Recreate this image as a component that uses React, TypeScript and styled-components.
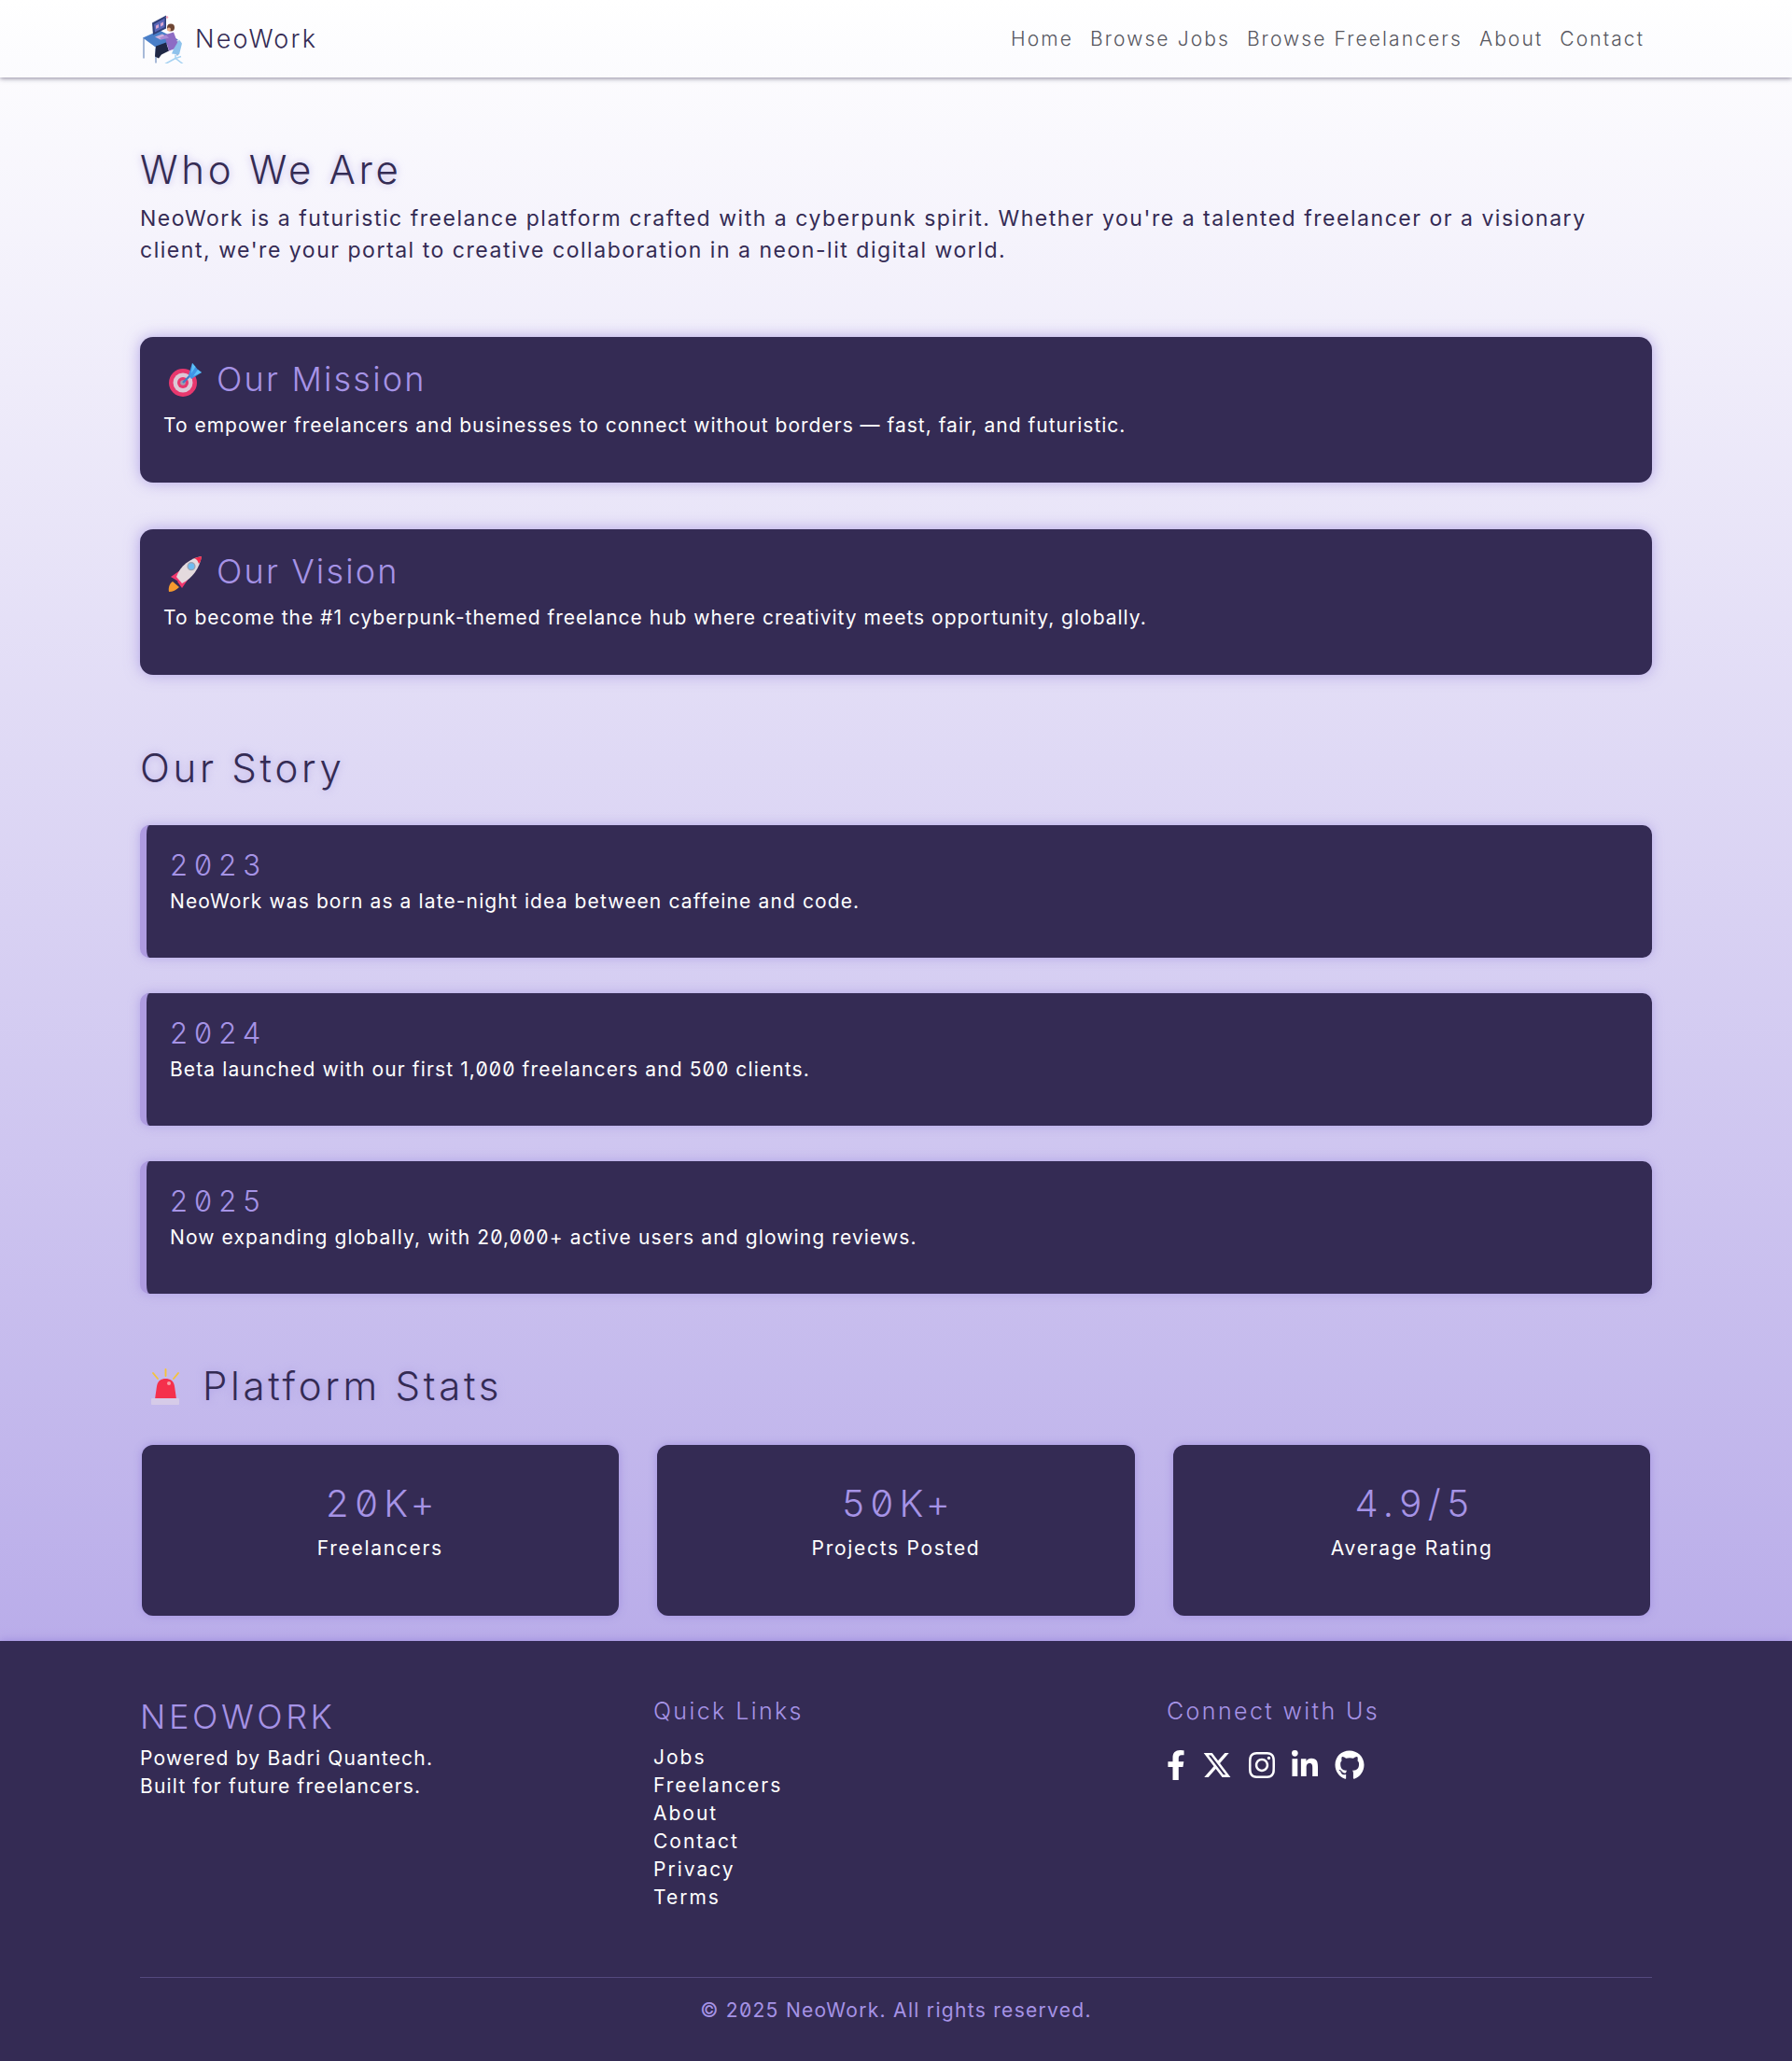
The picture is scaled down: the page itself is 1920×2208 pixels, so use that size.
import React from "react";
import styled, { createGlobalStyle } from "styled-components";
import { FaFacebookF, FaInstagram, FaLinkedinIn, FaGithub } from "react-icons/fa";
import { FaXTwitter } from "react-icons/fa6";

const dark = "#342b54";
const accent = "#a693e6";

const Global = createGlobalStyle`
  html, body { margin: 0; padding: 0; }
  body {
    min-height: 2208px;
    background: linear-gradient(180deg, #ffffff 0%, #a898e4 100%);
    font-family: Inter, "Liberation Sans", sans-serif;
    font-weight: 400;
    font-feature-settings: "zero" 1;
    color: ${dark};
  }
  * { box-sizing: border-box; }
`;

const Header = styled.header`
  height: 83px;
  padding: 0 158px 0 150px;
  display: flex;
  align-items: center;
  justify-content: space-between;
  background: linear-gradient(180deg, #ffffff, #fbfbfe);
  box-shadow: 0 1px 5px rgba(40, 32, 70, 0.55);
  position: relative;
`;
const Brand = styled.div`
  display: flex;
  align-items: center;
  gap: 11px;
  font-size: 27px;
  font-weight: 300;
  letter-spacing: 2.2px;
  color: ${dark};
`;
const Nav = styled.nav`
  display: flex;
  gap: 18px;
`;
const NavLink = styled.a`
  font-size: 21px;
  font-weight: 300;
  color: #56565e;
  letter-spacing: 2.1px;
`;

const Main = styled.main`
  padding: 75px 150px 27px;
`;
const Heading = styled.h1`
  margin: 0;
  font-size: 42px;
  line-height: 48px;
  font-weight: 300;
  letter-spacing: 3.7px;
  color: ${dark};
  text-shadow: 0 0 8px rgba(160, 143, 224, 0.6);
  display: flex;
  align-items: center;
  gap: 23px;
`;
const Lead = styled.p`
  margin: 11px 0 0;
  max-width: 1575px;
  font-size: 23px;
  line-height: 34px;
  letter-spacing: 1.53px;
  color: ${dark};
`;
const Cards = styled.div`
  margin-top: 76px;
  display: flex;
  flex-direction: column;
  gap: 50px;
`;
const Card = styled.section`
  height: 156px;
  padding: 23px 25px 0;
  border-radius: 14px;
  background: ${dark};
  box-shadow: 0 0 16px rgba(160, 143, 224, 0.75);
`;
const CardTitle = styled.h2`
  margin: 0;
  font-size: 36px;
  line-height: 44px;
  font-weight: 300;
  letter-spacing: 2.2px;
  color: ${accent};
  display: flex;
  align-items: center;
  gap: 16px;
  padding-left: 5px;
`;
const BodyText = styled.p`
  margin: 13px 0 0;
  font-size: 21px;
  line-height: 30px;
  letter-spacing: 1px;
  color: #fff;
`;
const StoryHeading = styled(Heading)`
  margin-top: 76px;
`;
const Timeline = styled.div`
  margin-top: 37px;
  display: flex;
  flex-direction: column;
  gap: 38px;
`;
const Entry = styled.article`
  height: 142px;
  padding: 26px 25px 0;
  border-left: 7px solid #ae9be0;
  border-radius: 10px;
  background: ${dark};
  box-shadow: 0 0 12px rgba(160, 143, 224, 0.65);
`;
const Year = styled.h3`
  margin: 0;
  font-size: 31px;
  line-height: 34px;
  font-weight: 300;
  letter-spacing: 7px;
  color: ${accent};
`;
const EntryText = styled(BodyText)`
  margin-top: 7px;
  letter-spacing: 1.12px;
`;
const StatsHeading = styled(Heading)`
  margin-top: 75px;
  padding-left: 10px;
`;
const Stats = styled.div`
  margin-top: 39px;
  padding: 0 1.5px;
  display: grid;
  grid-template-columns: repeat(3, 1fr);
  gap: 41px;
`;
const Stat = styled.div`
  height: 183px;
  padding-top: 40px;
  border-radius: 12px;
  background: ${dark};
  text-align: center;
  box-shadow: 0 0 10px rgba(160, 143, 224, 0.9);
`;
const StatValue = styled.div`
  font-size: 40px;
  line-height: 46px;
  font-weight: 300;
  letter-spacing: 6.5px;
  text-indent: 6.5px;
  color: ${accent};
`;
const StatLabel = styled.div`
  margin-top: 10px;
  font-size: 21px;
  line-height: 30px;
  letter-spacing: 1.7px;
  color: #fff;
`;

const Footer = styled.footer`
  height: 450px;
  padding: 60px 150px 0;
  background: ${dark};
  box-shadow: 0 -2px 8px rgba(160, 143, 224, 0.8);
`;
const FooterGrid = styled.div`
  height: 300px;
  display: grid;
  grid-template-columns: repeat(3, 1fr);
  gap: 30px;
  align-items: start;
`;
const FooterBrand = styled.h2`
  margin: 0 0 9px;
  font-size: 36px;
  line-height: 42px;
  font-weight: 300;
  letter-spacing: 3.6px;
  color: ${accent};
`;
const FooterText = styled.div`
  font-size: 21px;
  line-height: 30px;
  letter-spacing: 1.2px;
  color: #fff;
`;
const FooterHeading = styled.h3`
  margin: 0 0 20px;
  font-size: 25px;
  line-height: 30px;
  font-weight: 300;
  letter-spacing: 2.4px;
  color: ${accent};
`;
const LinkList = styled.ul`
  margin: 0;
  padding: 0;
  list-style: none;
`;
const LinkItem = styled.li`
  font-size: 21px;
  line-height: 30px;
  letter-spacing: 2px;
  color: #fff;
`;
const Socials = styled.div`
  margin-top: 27px;
  display: flex;
  gap: 18px;
  color: #fff;
  font-size: 32px;
  line-height: 0;
`;
const SocialLink = styled.a<{ $w: number }>`
  width: ${(p) => p.$w}px;
  display: flex;
  justify-content: center;
  svg { flex-shrink: 0; }
`;
const Rule = styled.hr`
  margin: 0;
  border: 0;
  border-top: 1px solid rgba(160, 143, 224, 0.3);
`;
const Copy = styled.div`
  margin-top: 20px;
  font-size: 21px;
  line-height: 30px;
  letter-spacing: 1.3px;
  text-align: center;
  color: ${accent};
`;

const Logo = () => (
  <svg width="48" height="52" viewBox="2 3.5 48 52" aria-hidden="true">
    <path d="M6 28 V50 M19 39 V55 M42 31 V47" stroke="#7a96c4" strokeWidth="1.3" fill="none" />
    <path d="M5 28 L23 20 L43 30 L20 39Z" fill="#4a7fc8" />
    <path d="M15 12 L30 4 L30 18 L16 25Z" fill="#2f3f7a" />
    <path d="M17 13.5 L28.5 7 L28.5 16.5 L18 22Z" fill="#5a66b8" />
    <path d="M19 15l3-1.6v3.5l-3 1.6zM24 12.5l3-1.6v3.5l-3 1.6z" fill="#d9a6cf" />
    <path d="M18 27 L26 24 L31 27 L24 30Z" fill="#cdb0dc" />
    <path d="M19 37 L30 33 L33 42 L25 46 L22 50 L18 48Z" fill="#1f2745" />
    <path d="M28 25 L38 22 L44 38 L33 42Z" fill="#8d6cc4" />
    <path d="M30 25 L23 28 L25 30 L33 28Z" fill="#a98ad6" />
    <circle cx="35" cy="17" r="4" fill="#6e4634" />
    <circle cx="33" cy="19" r="2" fill="#e9b08c" />
    <path d="M38 40 L44 30 L47 34 L44 46 L36 45Z" fill="#8ec2ec" />
    <path d="M40 46 V51 M29 56 L40 50 L48 56 M40 50 L46 48" stroke="#a6d2f2" strokeWidth="1.5" fill="none" />
    <circle cx="31" cy="6" r="1.3" fill="#f3a0b8" />
  </svg>
);

const TargetIcon = () => (
  <svg width="36" height="36" viewBox="0 0 36 36" overflow="visible" aria-hidden="true">
    <circle cx="16" cy="22" r="15" fill="#e8386e" />
    <circle cx="16" cy="22" r="10.5" fill="#dcc8d6" />
    <circle cx="16" cy="22" r="6" fill="#e8386e" />
    <circle cx="16" cy="22" r="2.8" fill="#a39db0" />
    <path d="M16 22 L27 11" stroke="#3f80c8" strokeWidth="2.4" />
    <path d="M22 14 L26 1 L29.5 5 L32 8 L36 11 L25 18Z" fill="#3f94e6" />
    <path d="M26 1 L29.5 5 L25 12Z M36 11 L32 8 L27 15Z" fill="#5cc0f7" />
  </svg>
);
const RocketIcon = () => (
  <svg width="36" height="36" viewBox="0 0 36 36" overflow="visible" aria-hidden="true">
    <path d="M1 40 C0 35 2 31 5 29 L12 35 C9 38 5 40 1 40Z" fill="#f59a2e" />
    <path d="M3 24 L13 17 L13 30Z" fill="#f0386f" />
    <path d="M15 36 L24 23 L10 29Z" fill="#f0386f" />
    <path d="M9 24 C13 12 24 4 36 2 C34 14 26 26 15 31Z" fill="#e4dade" />
    <path d="M28 4 L36 2 C36 4 35 8 33 10 C32 7 31 5 28 4Z" fill="#f12a4d" />
    <circle cx="25" cy="12.7" r="4.6" fill="#9aa3b3" />
    <circle cx="25" cy="12.7" r="3.2" fill="#6fbcf2" />
  </svg>
);
const AlarmIcon = () => (
  <svg width="34" height="40" viewBox="0 0 34 40" aria-hidden="true">
    <path d="M17.5 2v7M4 6l5 6M31 6l-5 6" stroke="#f5c33b" strokeWidth="1.9" strokeLinecap="round" />
    <path d="M6 34 L8 20 C9 14 13 12 17.5 12 C22 12 26 14 27 20 L29 34Z" fill="#f5304c" />
    <circle cx="21" cy="17" r="2" fill="#f7a0a8" />
    <rect x="2" y="33" width="30" height="7" rx="1" fill="#d6cbe8" />
  </svg>
);

const navItems = ["Home", "Browse Jobs", "Browse Freelancers", "About", "Contact"];
const stats = [
  ["20K+", "Freelancers"],
  ["50K+", "Projects Posted"],
  ["4.9/5", "Average Rating"],
];
const story = [
  ["2023", "NeoWork was born as a late-night idea between caffeine and code."],
  ["2024", "Beta launched with our first 1,000 freelancers and 500 clients."],
  ["2025", "Now expanding globally, with 20,000+ active users and glowing reviews."],
];
const links = ["Jobs", "Freelancers", "About", "Contact", "Privacy", "Terms"];
const socials = [
  { w: 20, id: "facebook", icon: <FaFacebookF /> },
  { w: 32, id: "x", icon: <FaXTwitter /> },
  { w: 28, id: "instagram", icon: <FaInstagram /> },
  { w: 28, id: "linkedin", icon: <FaLinkedinIn /> },
  { w: 31, id: "github", icon: <FaGithub /> },
];

export default function App() {
  return (
    <>
      <Global />
      <Header>
        <Brand>
          <Logo />
          NeoWork
        </Brand>
        <Nav>
          {navItems.map((n) => (
            <NavLink key={n}>{n}</NavLink>
          ))}
        </Nav>
      </Header>
      <Main>
        <Heading>Who We Are</Heading>
        <Lead>
          NeoWork is a futuristic freelance platform crafted with a cyberpunk spirit. Whether you're a talented
          freelancer or a visionary client, we're your portal to creative collaboration in a neon-lit digital world.
        </Lead>
        <Cards>
          <Card>
            <CardTitle>
              <TargetIcon />
              Our Mission
            </CardTitle>
            <BodyText>To empower freelancers and businesses to connect without borders — fast, fair, and futuristic.</BodyText>
          </Card>
          <Card>
            <CardTitle>
              <RocketIcon />
              Our Vision
            </CardTitle>
            <BodyText>To become the #1 cyberpunk-themed freelance hub where creativity meets opportunity, globally.</BodyText>
          </Card>
        </Cards>
        <StoryHeading>Our Story</StoryHeading>
        <Timeline>
          {story.map(([y, t]) => (
            <Entry key={y}>
              <Year>{y}</Year>
              <EntryText>{t}</EntryText>
            </Entry>
          ))}
        </Timeline>
        <StatsHeading>
          <AlarmIcon />
          Platform Stats
        </StatsHeading>
        <Stats>
          {stats.map(([v, l]) => (
            <Stat key={l}>
              <StatValue>{v}</StatValue>
              <StatLabel>{l}</StatLabel>
            </Stat>
          ))}
        </Stats>
      </Main>
      <Footer>
        <FooterGrid>
          <div>
            <FooterBrand>NEOWORK</FooterBrand>
            <FooterText>
              Powered by Badri Quantech.
              <br />
              Built for future freelancers.
            </FooterText>
          </div>
          <div>
            <FooterHeading>Quick Links</FooterHeading>
            <LinkList>
              {links.map((l) => (
                <LinkItem key={l}>{l}</LinkItem>
              ))}
            </LinkList>
          </div>
          <div>
            <FooterHeading>Connect with Us</FooterHeading>
            <Socials>
              {socials.map((s) => (
                <SocialLink key={s.id} $w={s.w}>
                  {s.icon}
                </SocialLink>
              ))}
            </Socials>
          </div>
        </FooterGrid>
        <Rule />
        <Copy>© 2025 NeoWork. All rights reserved.</Copy>
      </Footer>
    </>
  );
}
